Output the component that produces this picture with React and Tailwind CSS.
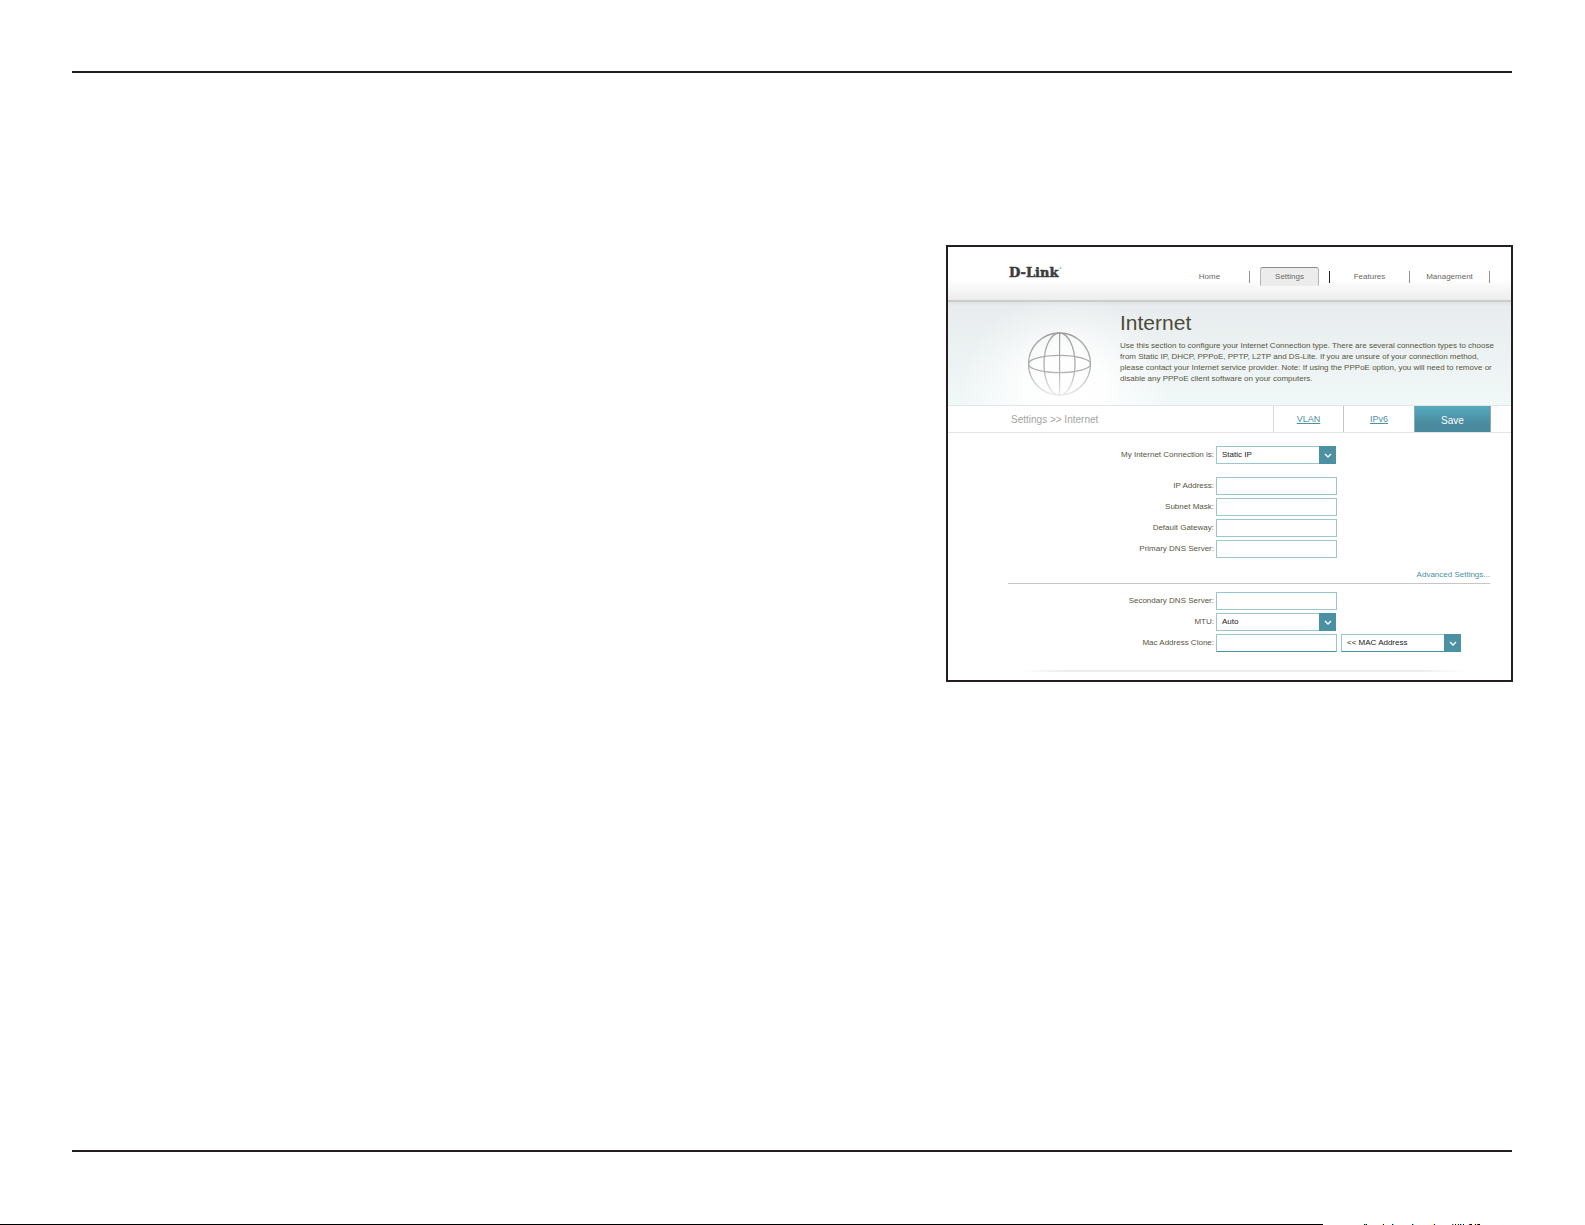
const NAV = [
  { label: 'Home' },
  { label: 'Settings', active: true },
  { label: 'Features' },
  { label: 'Management' },
];

const SPECKS = [
  [0, 1, '#000'], [1, 1, '#0f0'], [2, 1, '#00008b'],
  [18, 1, '#ff0'], [19, 1, '#000'],
  [28, 1, '#000'], [29, 1, '#0ff'],
  [48, 1, '#000'], [49, 1, '#0ff'],
  [69, 1, '#ff0'], [70, 1, '#00f'],
  [88, 1, '#f00'], [89, 1, '#0ff'], [91, 1, '#000'],
  [93, 1, '#ff0'], [94, 1, '#00f'], [96, 1, '#000'], [97, 1, '#0ff'], [99, 1, '#000'],
  [105, 1, '#f00'], [106, 2, '#000'],
  [110, 1, '#ff0'], [111, 1, '#000'],
  [113, 1, '#f00'], [114, 2, '#000'],
];

function Logo() {
  return (
    <svg viewBox="0 0 56 16" className="h-4 w-14" role="img" aria-label="D-Link">
      <text
        x="1"
        y="13"
        fontFamily="DejaVu Serif, serif"
        fontSize="13"
        fontWeight="bold"
        fill="#3b3b3d"
        stroke="#3b3b3d"
        strokeWidth="0.5"
      >
        D-Link
      </text>
      <circle cx="52.5" cy="4" r="0.8" fill="none" stroke="#8a8a8a" strokeWidth="0.5" />
    </svg>
  );
}

function Globe() {
  return (
    <svg viewBox="0 0 64 64" className="h-16 w-16" fill="none" aria-hidden="true">
      <defs>
        <linearGradient id="globeFade" gradientUnits="userSpaceOnUse" x1="0" y1="0" x2="0" y2="64">
          <stop offset="0" stopColor="#a09e9d" />
          <stop offset="0.6" stopColor="#b3b1b0" />
          <stop offset="1" stopColor="#ececec" />
        </linearGradient>
      </defs>
      <g stroke="url(#globeFade)" strokeWidth="1.3">
        <circle cx="31.5" cy="32" r="31" />
        <ellipse cx="31.5" cy="32" rx="15.5" ry="31" />
        <ellipse cx="31.5" cy="32" rx="31" ry="8.6" />
      </g>
      <rect x="31" y="1" width="1.2" height="62" fill="url(#globeFade)" />
    </svg>
  );
}

function Row({ id, label, children }) {
  return (
    <div className="flex items-center gap-[2px]">
      <label htmlFor={id} className="w-[206px] shrink-0 text-right text-[8px] leading-3 text-[#57553f]">
        {label}
      </label>
      <div className="flex gap-1">{children}</div>
    </div>
  );
}

function Field({ id, strong }) {
  return (
    <input
      id={id}
      type="text"
      className={
        'h-[18px] w-[121px] border bg-white px-1 text-[8px] text-[#333] outline-none ' +
        (strong ? 'border-[#9cc5ce] border-b-[#4b91a3]' : 'border-[#9cc5ce]')
      }
    />
  );
}

function Select({ id, value, label, strong }) {
  return (
    <div className="relative h-[18px] w-[120px]">
      <select
        id={id}
        aria-label={label}
        className={
          'block h-full w-full appearance-none border bg-white pl-[5px] text-[8px] leading-3 text-[#222] outline-none ' +
          (strong ? 'border-[#9cc5ce] border-b-[#4b91a3]' : 'border-[#9cc5ce]')
        }
      >
        <option>{value}</option>
      </select>
      <span className="pointer-events-none absolute inset-y-0 right-0 flex w-[17px] items-center justify-center bg-[#4b91a3]">
        <svg viewBox="0 0 8 5" className="h-[5px] w-2" fill="none" aria-hidden="true">
          <path d="M1 1 L4 4 L7 1" stroke="#fff" strokeWidth="1.3" />
        </svg>
      </span>
    </div>
  );
}

export default function App() {
  return (
    <div className="flex min-h-screen flex-col bg-white pt-[71px] font-['Liberation_Sans',Arial,sans-serif]">
      <div className="flex grow flex-col px-[72px]">
        <hr className="mr-px border-t-2 border-[#231f20]" />

        <main className="mt-[172px] grid grow grid-cols-[874fr_567fr] items-start">
          <section className="col-start-2 border-2 border-[#231f20] bg-white">
            <header className="flex h-[55px] items-start justify-between border-b-2 border-[#cbcccc] bg-linear-to-b from-white from-60% to-[#ededed] pl-[60px] pr-[21px]">
              <a href="#home" className="mt-[17px]">
                <Logo />
              </a>
              <nav className="mt-5 flex text-[8px] text-[#6b6964]">
                {NAV.map((item) => (
                  <div key={item.label} className="flex w-20 items-center justify-end">
                    <div className="flex grow justify-center">
                      <a
                        href={'#' + item.label}
                        className={
                          item.active
                            ? 'flex h-[19px] w-[59px] items-center justify-center rounded-t-[3px] border border-t-[#8c8c8c] border-r-[#b5b5b5] border-b-[#ececec] border-l-[#b5b5b5] bg-[#ececec]'
                            : 'flex h-[19px] items-center justify-center'
                        }
                      >
                        {item.label}
                      </a>
                    </div>
                    <span className={item.active ? 'h-3 w-px bg-[#222]' : 'h-3 w-px bg-[#8f8f8f]'} />
                  </div>
                ))}
              </nav>
            </header>

            <div className="flex h-[103px] bg-[radial-gradient(ellipse_105px_95px_at_118px_88px,#ffffff_0%,#ffffffe6_35%,#ffffff66_70%,#ffffff00_100%),linear-gradient(#dfe3e4,#e8ecee_4px,#f1f8f8)]">
              <div className="ml-20 mt-[30px] shrink-0">
                <Globe />
              </div>
              <div className="ml-7 mr-3 mt-[7px]">
                <h1 className="text-[21px] leading-7 text-[#4c4b3a]">Internet</h1>
                <p className="mt-[3px] text-[8px] leading-[11px] text-[#57553f]">
                  Use this section to configure your Internet Connection type. There are several connection types to choose
                  from Static IP, DHCP, PPPoE, PPTP, L2TP and DS-Lite. If you are unsure of your connection method,
                  please contact your Internet service provider. Note: If using the PPPoE option, you will need to remove
                  or disable any PPPoE client software on your computers.
                </p>
              </div>
            </div>

            <div className="flex h-7 items-stretch justify-between border-y border-[#e4e6e6] pl-[63px] pr-5">
              <div className="flex items-center text-[10px] text-[#a5a5a3]">Settings &gt;&gt; Internet</div>
              <div className="flex text-[9px]">
                <a href="#vlan" className="flex w-[70px] items-center justify-center border-l border-[#d9d9d9] pt-0.5 text-[#4b91a3] underline">
                  VLAN
                </a>
                <a href="#ipv6" className="flex w-[71px] items-center justify-center border-l border-[#c4c4c4] pt-0.5 text-[#4b91a3] underline">
                  IPv6
                </a>
                <button type="button" className="w-[77px] border-x border-[#8fa9b0] bg-linear-to-b from-[#56abbf] to-[#498a9e] to-70% pt-0.5 text-[10px] text-white">
                  Save
                </button>
              </div>
            </div>

            <form className="pl-[60px] pr-[21px] pt-[13px] pb-2">
              <Row id="type" label="My Internet Connection is:">
                <Select id="type" value="Static IP" />
              </Row>
              <div className="mt-[13px] flex flex-col gap-[3px]">
                <Row id="ip" label="IP Address:"><Field id="ip" /></Row>
                <Row id="mask" label="Subnet Mask:"><Field id="mask" /></Row>
                <Row id="gateway" label="Default Gateway:"><Field id="gateway" /></Row>
                <Row id="dns1" label="Primary DNS Server:"><Field id="dns1" /></Row>
              </div>
              <div className="mt-[11px] flex justify-end border-b border-[#c6c6c6] pb-[2px] text-[8px] leading-3">
                <a href="#advanced" className="text-[#4b91a3]">Advanced Settings...</a>
              </div>
              <div className="mt-2 flex flex-col gap-[3px]">
                <Row id="dns2" label="Secondary DNS Server:"><Field id="dns2" /></Row>
                <Row id="mtu" label="MTU:"><Select id="mtu" value="Auto" /></Row>
                <Row id="mac" label="Mac Address Clone:">
                  <Field id="mac" strong />
                  <Select id="macsel" label="MAC Address" value="<< MAC Address" strong />
                </Row>
              </div>
              <div className="ml-3 mr-6 mt-[18px] h-[2px] bg-[linear-gradient(to_right,#fff,#ececec_10%,#ececec_90%,#fff)]" />
            </form>
          </section>
        </main>

        <hr className="mr-px border-t-2 border-[#231f20]" />
      </div>

      <footer className="mt-[72px] flex h-px">
        <div className="grow bg-black" />
        <svg width="262" height="1" viewBox="-41 0 262 1" shapeRendering="crispEdges" aria-hidden="true">
          {SPECKS.map(([x, w, fill]) => (
            <rect key={x} x={x} y="0" width={w} height="1" fill={fill} />
          ))}
        </svg>
      </footer>
    </div>
  );
}
